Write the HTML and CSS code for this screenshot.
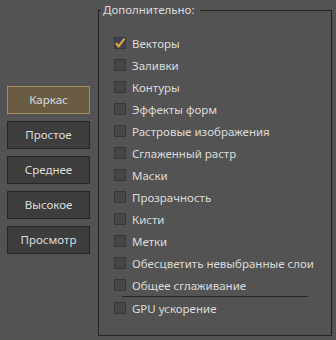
FILE: index.html
```html
<!doctype html>
<html>
<head>
    <meta charset="UTF-8">
    <link rel="stylesheet" href="styles.css">
</head>
<body>
<div class="panel">
    <div class="modes">
        <div class="mode-btn is-active">Каркас</div>
        <div class="mode-btn">Простое</div>
        <div class="mode-btn">Среднее</div>
        <div class="mode-btn">Высокое</div>
        <div class="mode-btn">Просмотр</div>
    </div>
    <fieldset class="extra">
        <legend>Дополнительно:</legend>
        <div class="opt">
            <span class="box is-checked">
                <svg width="12" height="12" viewBox="0 0 12 12"><path d="M2 6.2 L4.6 9.4 L10.4 1.6" fill="none" stroke="#e2ad2c" stroke-width="2"/></svg>
            </span>Векторы
        </div>
        <div class="opt"><span class="box"></span>Заливки</div>
        <div class="opt"><span class="box"></span>Контуры</div>
        <div class="opt"><span class="box"></span>Эффекты форм</div>
        <div class="opt"><span class="box"></span>Растровые изображения</div>
        <div class="opt"><span class="box"></span>Сглаженный растр</div>
        <div class="opt"><span class="box"></span>Маски</div>
        <div class="opt"><span class="box"></span>Прозрачность</div>
        <div class="opt"><span class="box"></span>Кисти</div>
        <div class="opt"><span class="box"></span>Метки</div>
        <div class="opt"><span class="box"></span>Обесцветить невыбранные слои</div>
        <div class="opt"><span class="box"></span>Общее сглаживание</div>
        <div class="sep"></div>
        <div class="opt"><span class="box"></span>GPU ускорение</div>
    </fieldset>
</div>
</body>
</html>
```

FILE: styles.css
```css
html, body {
    margin: 0;
    background-color: #535353;
}

.panel {
    display: flex;
    align-items: flex-start;
    font-family: "Noto Sans", "Open Sans", sans-serif;
    font-size: 11.5px;
    color: #dcdcdc;
}

.modes {
    display: flex;
    flex-direction: column;
    gap: 7px;
    width: 83px;
    margin: 86px 0 0 7px;
}

.mode-btn {
    box-sizing: border-box;
    height: 28px;
    line-height: 26px;
    text-align: center;
    background-color: #3d3d3d;
    border: 1px solid #262626;
}

.mode-btn.is-active {
    background-color: #6a5b43;
    border-color: #a38d63;
}

.extra {
    box-sizing: border-box;
    width: 234px;
    height: 334px;
    margin: 2px 0 0 8px;
    padding: 14px 0 0 15px;
    border: 1px solid #242424;
    border-right-color: #1c1c1c;
    min-width: 0;
}

.extra legend {
    margin-left: -13px;
    padding: 0 5px 0 2px;
    line-height: 16px;
}

.opt {
    display: flex;
    align-items: center;
    height: 22px;
    white-space: nowrap;
}

.box {
    box-sizing: border-box;
    width: 12px;
    height: 12px;
    margin-right: 6px;
    background-color: #474747;
    border: 1px solid #383838;
    flex: none;
}

.box svg {
    display: block;
    margin: -1px;
}

.box.is-checked {
    background-color: #41405a;
    border-color: #3a3a3a;
}

.sep {
    height: 1px;
    width: 186px;
    margin-left: 8px;
    background-color: #262626;
}
```
